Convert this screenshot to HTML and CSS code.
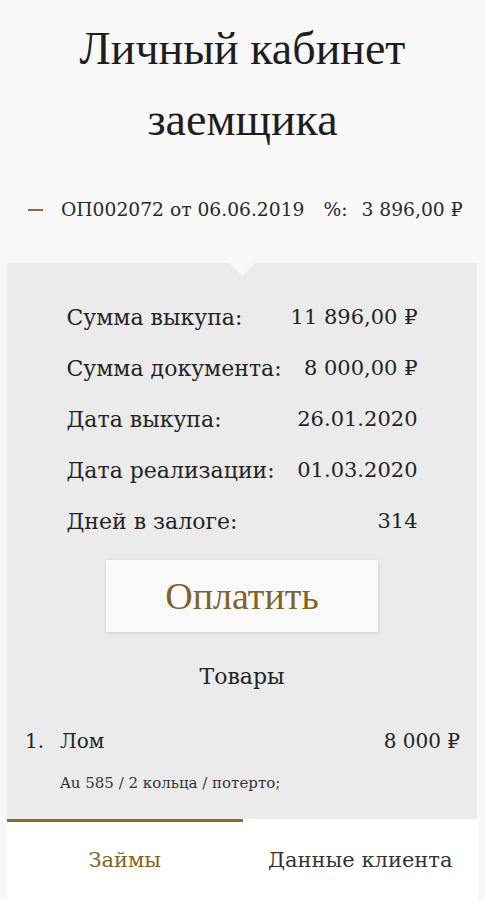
FILE: index.html
```html
<!DOCTYPE html>
<html lang="ru">
<head>
<meta charset="utf-8">
<title>Личный кабинет заемщика</title>
<link rel="stylesheet" href="styles.css">
</head>
<body>
<div class="page">
  <h1 class="title">Личный кабинет<br>заемщика</h1>
  <div class="loan-head">
    <span class="dash"></span>
    <span class="loan-num">ОП002072 от 06.06.2019</span>
    <span class="loan-pct">%:</span>
    <span class="loan-sum">3 896,00 ₽</span>
  </div>
  <section class="panel">
    <table class="details">
      <tr><td class="lbl">Сумма выкупа:</td><td class="val">11 896,00 ₽</td></tr>
      <tr><td class="lbl">Сумма документа:</td><td class="val">8 000,00 ₽</td></tr>
      <tr><td class="lbl">Дата выкупа:</td><td class="val">26.01.2020</td></tr>
      <tr><td class="lbl">Дата реализации:</td><td class="val">01.03.2020</td></tr>
      <tr><td class="lbl">Дней в залоге:</td><td class="val">314</td></tr>
    </table>
    <div class="btn-wrap"><button class="pay">Оплатить</button></div>
    <h2 class="goods-title">Товары</h2>
    <div class="item">
      <span class="item-no">1.</span>
      <span class="item-name">Лом</span>
      <span class="item-price">8 000 ₽</span>
    </div>
    <div class="item-desc">Au 585 / 2 кольца / потерто;</div>
  </section>
  <nav class="tabs">
    <div class="tab active">Займы</div>
    <div class="tab">Данные клиента</div>
  </nav>
</div>
</body>
</html>
```
FILE: styles.css
```css
html, body {
  margin: 0;
  padding: 0;
}
body {
  background: #f8f8f8;
  font-family: "DejaVu Serif", serif;
  color: #242424;
  height: 900px;
  overflow: hidden;
}
.page {
  display: flex;
  flex-direction: column;
}
.title {
  margin: 13px 0 0;
  font-family: "Liberation Serif", "Times New Roman", serif;
  font-weight: normal;
  font-size: 46px;
  line-height: 71px;
  text-align: center;
  color: #1e1e1e;
}
.loan-head {
  margin-top: 40px;
  display: flex;
  align-items: center;
  padding-left: 28px;
  font-size: 18.7px;
  line-height: 30px;
  color: #2a2a2a;
}
.dash {
  width: 15px;
  height: 2px;
  background: #8c6d2e;
  margin-right: 18px;
}
.loan-pct {
  margin-left: 19px;
  margin-right: 14px;
}
.panel {
  position: relative;
  margin: 38px 8px 0 7px;
  background: #ebebeb;
  display: flex;
  flex-direction: column;
  align-items: center;
  padding: 29px 0 26px;
}
.panel::before {
  content: "";
  position: absolute;
  top: 0;
  left: 50%;
  margin-left: -13px;
  border-left: 13px solid transparent;
  border-right: 13px solid transparent;
  border-top: 13px solid #f8f8f8;
}
.details {
  border-collapse: collapse;
  font-size: 21px;
  line-height: 51px;
}
.details td {
  padding: 0;
}
.details .lbl {
  font-size: 22px;
  padding-right: 9px;
}
.details .val {
  text-align: right;
}
.btn-wrap {
  margin-top: 13px;
}
.pay {
  width: 272px;
  height: 72px;
  border: none;
  background: #f9f9f9;
  box-shadow: 0 1px 4px rgba(0,0,0,0.12);
  font-family: "Liberation Serif", "Times New Roman", serif;
  font-size: 38px;
  line-height: 72px;
  color: #7d6526;
  padding: 0;
}
.goods-title {
  margin: 30px 0 0;
  font-weight: normal;
  font-size: 22px;
  line-height: 30px;
}
.item {
  align-self: stretch;
  display: flex;
  margin-top: 34px;
  padding: 0 17px 0 18px;
  font-size: 20px;
  line-height: 30px;
}
.item-no {
  width: 35px;
}
.item-price {
  margin-left: auto;
}
.item-desc {
  align-self: stretch;
  padding-left: 53px;
  margin-top: 17px;
  font-size: 15px;
  line-height: 20px;
  color: #333;
}
.tabs {
  margin: 0 7px;
  background: #fff;
  display: flex;
  height: 86px;
}
.tab {
  flex: 1;
  text-align: center;
  font-size: 21px;
  padding-top: 23px;
  line-height: 30px;
  color: #333;
  border-top: 3px solid transparent;
}
.tab.active {
  color: #7d6526;
  border-top-color: #8c6d2e;
}
```
